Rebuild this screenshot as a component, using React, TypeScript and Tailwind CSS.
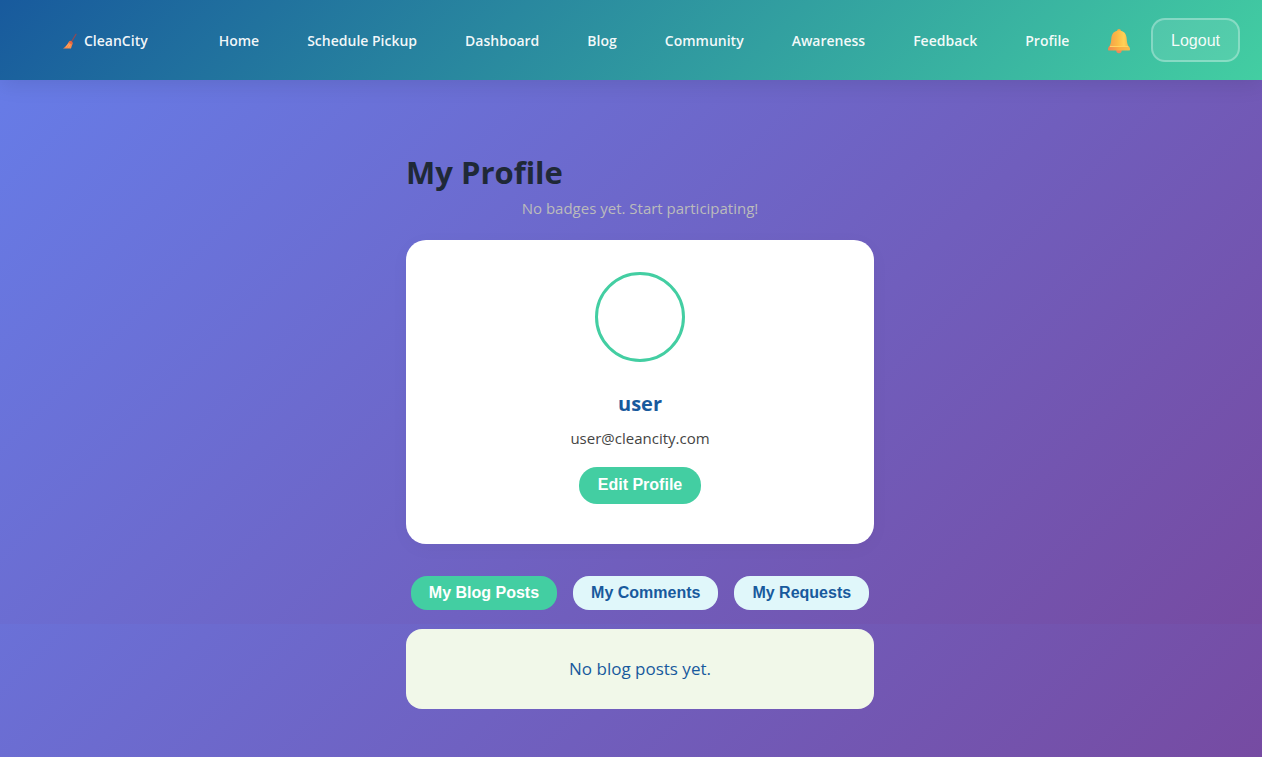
import { useState } from "react";

const links = ["Home", "Schedule Pickup", "Dashboard", "Blog", "Community", "Awareness", "Feedback", "Profile"];

const tabs = [
  { label: "My Blog Posts", empty: "No blog posts yet." },
  { label: "My Comments", empty: "No comments yet." },
  { label: "My Requests", empty: "No requests yet." },
];

function Broom() {
  return (
    <svg viewBox="0 0 32 32" className="size-4" aria-hidden="true">
      <path d="M28 2.5 18 19" stroke="#8f4a55" strokeWidth="2.600" strokeLinecap="round" />
      <path d="M14.500 16.500c3 .4 5.500 2 6.500 4.500L18 31H2c5-2.500 9-8.500 12.500-14.500z" fill="#fb8b4b" />
      <path d="M16 15.500c2.500.4 4.500 1.600 5.500 4l-1 4-7.500-4z" fill="#e8663f" />
      <path d="M8 28l6-7M13 29l3-6" stroke="#ffb066" strokeWidth="1.500" />
    </svg>
  );
}

function Bell() {
  return (
    <svg viewBox="0 0 24 26" className="h-[26px] w-6" aria-hidden="true">
      <defs>
        <linearGradient id="bell-body" x1="0" x2="1" y1="0" y2="0">
          <stop offset="0" stopColor="#f2a04e" />
          <stop offset="0.4" stopColor="#fdb944" />
          <stop offset="0.75" stopColor="#ffd257" />
          <stop offset="1" stopColor="#f5b24a" />
        </linearGradient>
        <linearGradient id="bell-rim" x1="0" x2="1" y1="0" y2="0">
          <stop offset="0" stopColor="#ee8750" />
          <stop offset="0.5" stopColor="#fbad42" />
          <stop offset="1" stopColor="#f7bd4e" />
        </linearGradient>
      </defs>
      <circle cx="12" cy="22.600" r="2.700" fill="#f08a5b" />
      <circle cx="12" cy="2.800" r="1.900" fill="#f4a84a" />
      <path d="M12 2.500c5 0 7.400 3.600 7.700 8.200.2 4 .8 6.200 2.300 8.300H2c1.500-2.100 2.100-4.300 2.300-8.300C4.600 6.100 7 2.500 12 2.500z" fill="url(#bell-body)" />
      <path d="M2.300 18.300h19.400c.9 1 1.300 1.900 1.300 3.200 0 .7-.4 1-1 1H2c-.6 0-1-.3-1-1 0-1.300.4-2.200 1.300-3.200z" fill="url(#bell-rim)" />
      <path d="M3 18.500h18" stroke="#ffd560" strokeWidth="1" />
    </svg>
  );
}

export default function App() {
  const [active, setActive] = useState(0);

  return (
    <div className="flex min-h-screen flex-col bg-[linear-gradient(135deg,#667eea_0%,#764ba2_100%),linear-gradient(135deg,#667eea_0%,#764ba2_100%)] bg-[length:100%_624px] bg-[position:top,bottom] bg-no-repeat font-['Open_Sans','Noto_Sans',sans-serif]">
      <header className="flex h-20 items-center bg-[linear-gradient(135deg,#185a9d_0%,#43cea2_100%)] pr-[22px] pl-[62px] text-sm font-semibold text-white/95 shadow-[0_4px_20px_rgba(0,0,0,0.1)]">
        <nav aria-label="Main" className="flex items-center gap-12 pt-0.5">
          <a href="#home" className="mr-[23px] flex items-center gap-1.5 whitespace-nowrap">
            <Broom />
            CleanCity
          </a>
          {links.map((link) => (
            <a key={link} href={`#${link}`} className="whitespace-nowrap">
              {link}
            </a>
          ))}
        </nav>
        <button type="button" aria-label="Notifications" className="ml-auto pt-0.5">
          <Bell />
        </button>
        <button
          type="button"
          className="ml-5 h-11 rounded-[14px] border-2 border-white/30 bg-white/10 px-[18px] pt-0.5 font-['Liberation_Sans',sans-serif] text-base font-normal"
        >
          Logout
        </button>
      </header>

      <div className="pl-[18px]">
        <main className="mx-auto flex w-full max-w-[500px] flex-col px-4 pt-[68px] pb-12">
          <h1 className="text-[31px] leading-12 font-bold text-[#1f2937]">My Profile</h1>
          <p className="text-center text-[15px] leading-6 text-[#bbbbbb]">No badges yet. Start participating!</p>

          <section className="mt-5 flex flex-col items-center rounded-[20px] bg-white px-8 pt-8 pb-10 shadow-[0_4px_20px_rgba(0,0,0,0.03)]">
            <div className="size-[90px] rounded-full border-3 border-[#43cea2]" />
            <h2 className="mt-6 text-xl leading-9 font-bold text-[#185a9d]">user</h2>
            <p className="mt-1 text-[15px] leading-6 text-[#444444]">user@cleancity.com</p>
            <button
              type="button"
              className="mt-[17px] h-[37px] rounded-[18px] bg-[#43cea2] px-[19px] pb-0.5 font-['Liberation_Sans',sans-serif] text-base font-bold text-white"
            >
              Edit Profile
            </button>
          </section>

          <div role="tablist" className="mt-8 flex justify-center gap-4 font-['Liberation_Sans',sans-serif] text-base font-bold">
            {tabs.map((tab, i) => (
              <button
                key={tab.label}
                type="button"
                role="tab"
                aria-selected={i === active}
                onClick={() => setActive(i)}
                className={
                  i === active
                    ? "h-[34px] rounded-2xl bg-[#43cea2] px-[18px] whitespace-nowrap text-white"
                    : "h-[34px] rounded-2xl bg-[#e0f7fa] px-[18px] whitespace-nowrap text-[#185a9d]"
                }
              >
                {tab.label}
              </button>
            ))}
          </div>

          <section className="mt-[19px] rounded-2xl bg-[#f1f8e9] p-6 text-center text-[17px] leading-8 text-[#185a9d]">
            {tabs[active].empty}
          </section>
        </main>
      </div>
    </div>
  );
}
